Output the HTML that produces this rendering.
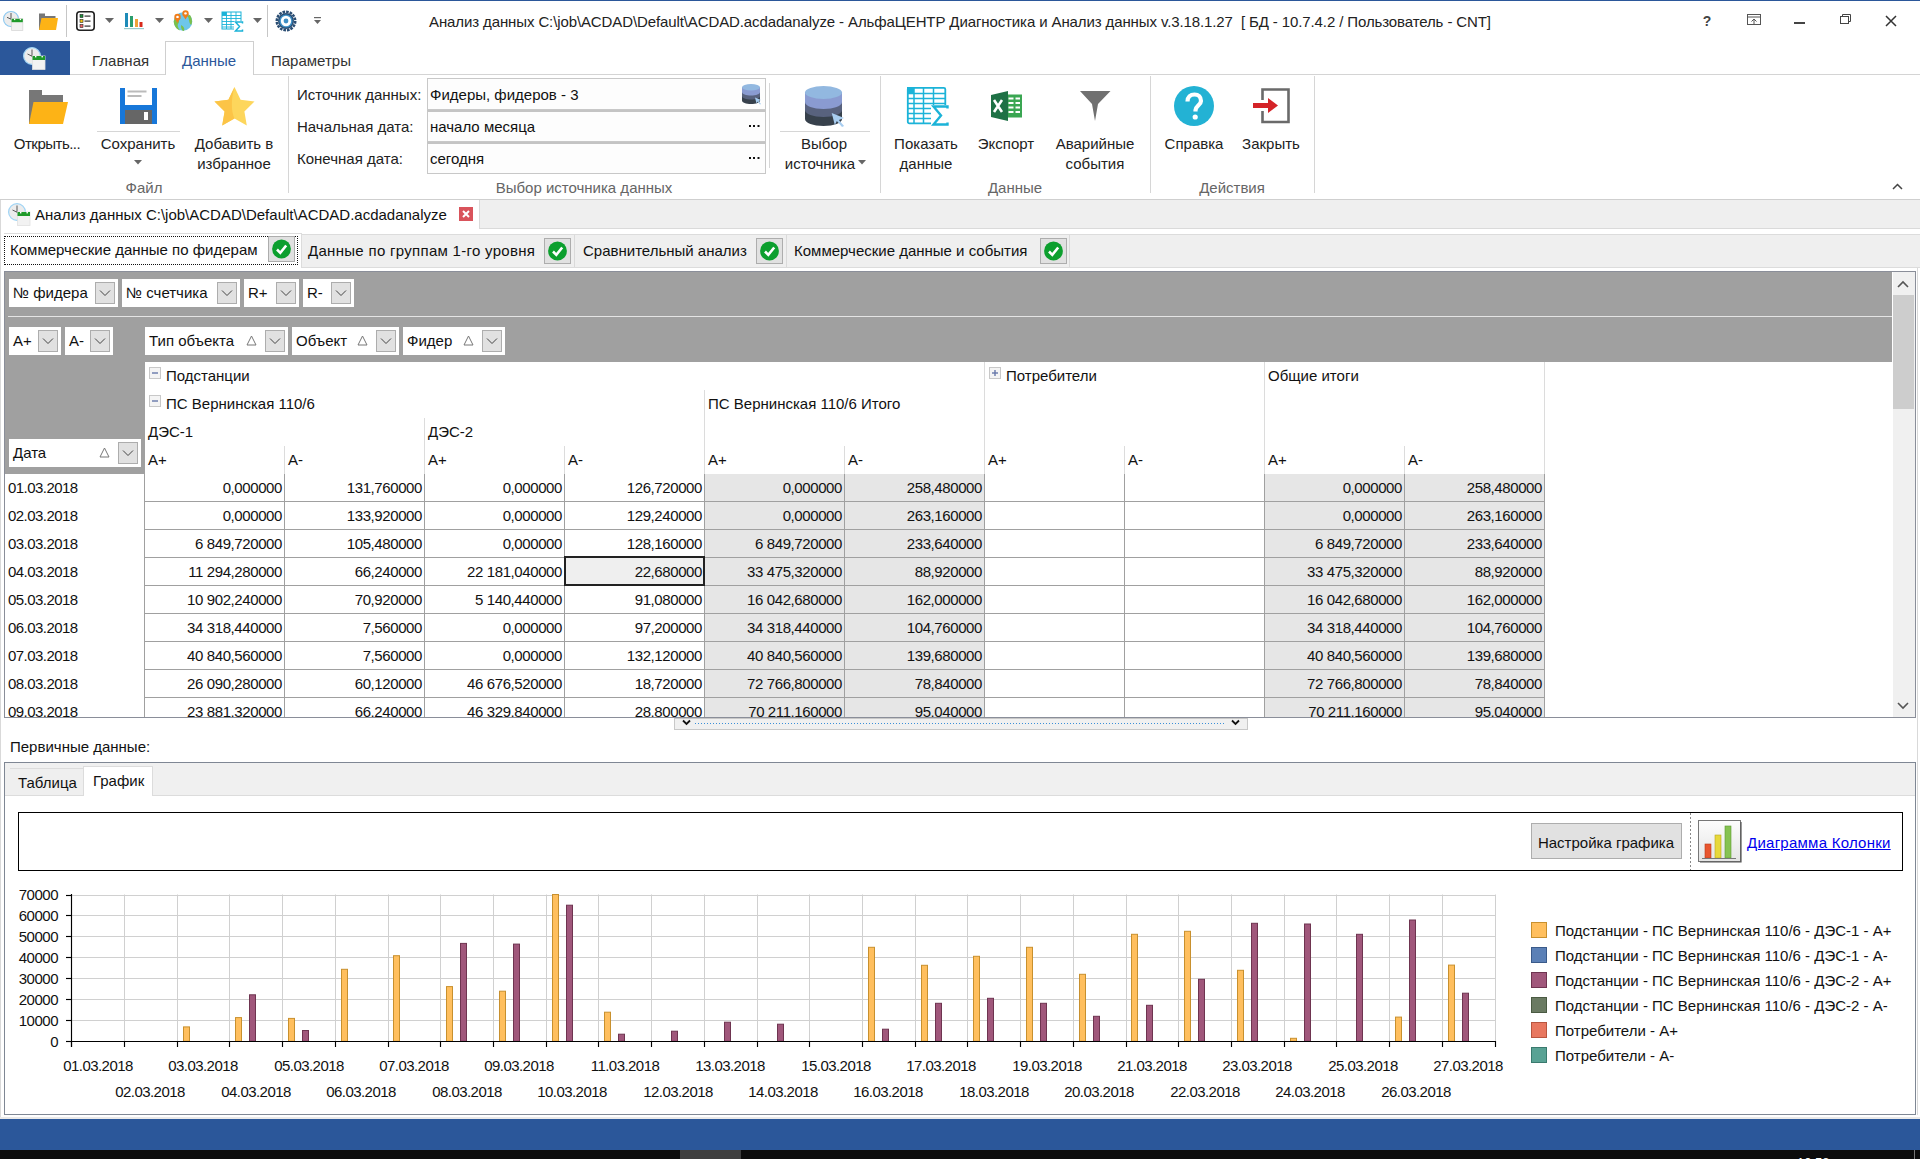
<!DOCTYPE html>
<html lang="ru"><head><meta charset="utf-8"><title>Анализ данных - АльфаЦЕНТР</title>
<style>
html,body{margin:0;padding:0;}
body{width:1920px;height:1159px;position:relative;overflow:hidden;background:#fff;font-family:"Liberation Sans",sans-serif;}
.t{position:absolute;white-space:pre;line-height:17px;font-family:"Liberation Sans",sans-serif;}
.r{position:absolute;}
.s{position:absolute;overflow:visible;}
</style></head><body>

<div class="r" style="left:0px;top:0px;width:1920px;height:1px;background:#2b579a;"></div>
<svg class="s" style="left:3px;top:11px;" width="22" height="21" viewBox="0 0 22 21"><circle cx="8" cy="8" r="7.5" fill="#ececec" stroke="#8cc8f0" stroke-width="1.1"/><path d="M8 2V8.2L4 6.3" stroke="#333" stroke-width="0.8" fill="none"/><rect x="8.6" y="7.8" width="11.2" height="11.6" fill="#f2f2f2" stroke="#d8d8d8" stroke-width="0.8"/><rect x="8.6" y="7.8" width="11.2" height="3.4" fill="#1f9a2a"/><rect x="11" y="7.8" width="1.3" height="1.3" fill="#fff"/><rect x="16.8" y="7.8" width="1.3" height="1.3" fill="#fff"/></svg>
<svg class="s" style="left:39px;top:13px;" width="20" height="17" viewBox="0 0 20 17"><path d="M0 0.5H6V3H16.5V17H0Z" fill="#777"/><path d="M2.5 5H19L17 17H0Z" fill="#fdb316"/></svg>
<div class="r" style="left:66px;top:5px;width:1px;height:32px;background:#c6c6c6;"></div>
<svg class="s" style="left:76px;top:11px;" width="19" height="20" viewBox="0 0 19 20"><rect x="0.8" y="0.8" width="17.4" height="18.4" rx="3" fill="#fff" stroke="#222" stroke-width="1.6"/><rect x="4" y="3.5" width="3" height="3" fill="#1b8f3a" stroke="#222" stroke-width=".6"/><rect x="8.5" y="4.5" width="6" height="1.2" fill="#333"/><rect x="4" y="8.5" width="3" height="3" fill="#f3c413" stroke="#222" stroke-width=".6"/><rect x="8.5" y="9.5" width="6" height="1.2" fill="#333"/><rect x="4" y="13.5" width="3" height="3" fill="#e66" stroke="#222" stroke-width=".6"/><rect x="8.5" y="14.5" width="6" height="1.2" fill="#333"/></svg>
<svg class="s" style="left:105px;top:18px;" width="9" height="5" viewBox="0 0 9 5"><path d="M0 0H9L4.5 5Z" fill="#666"/></svg>
<svg class="s" style="left:124px;top:13px;" width="21" height="17" viewBox="0 0 21 17"><rect x="1" y="0" width="3" height="14" fill="#1e8bb8"/><rect x="6" y="3" width="3" height="11" fill="#2a9d6c"/><rect x="11" y="6" width="3" height="8" fill="#f0a23a"/><rect x="15.5" y="9" width="3" height="5" fill="#d82a1c"/><rect x="0" y="15" width="20" height="1.2" fill="#9cc"/></svg>
<svg class="s" style="left:155px;top:18px;" width="9" height="5" viewBox="0 0 9 5"><path d="M0 0H9L4.5 5Z" fill="#666"/></svg>
<svg class="s" style="left:173px;top:10px;" width="20" height="22" viewBox="0 0 20 22"><circle cx="10" cy="11.5" r="9.3" fill="#6ec6ea"/><path d="M3 6C6 8 7 12 5 14C4 16 6 19 7 20.5C3 19 0.7 15 0.8 11Z" fill="#7cc04b"/><path d="M14 6C17 8 15 12 18 15C19.5 13 19.5 9 17 5Z" fill="#7cc04b"/><path d="M8 15C10 16 12 18 11 21C9 21 8 19 8 15Z" fill="#7cc04b"/><circle cx="4.5" cy="7" r="3.2" fill="#f07d1a"/><circle cx="4.5" cy="7" r="1.3" fill="#fff"/><path d="M1.6 8.3L4.5 13L7.4 8.3Z" fill="#f07d1a"/><circle cx="12.5" cy="3.5" r="3.2" fill="#f07d1a"/><circle cx="12.5" cy="3.5" r="1.3" fill="#fff"/><path d="M9.6 4.8L12.5 9.5L15.4 4.8Z" fill="#f07d1a"/></svg>
<svg class="s" style="left:204px;top:18px;" width="9" height="5" viewBox="0 0 9 5"><path d="M0 0H9L4.5 5Z" fill="#666"/></svg>
<svg class="s" style="left:221px;top:11px;" width="23" height="21" viewBox="0 0 23 21"><rect x="1" y="1" width="19" height="17" fill="#fff" stroke="#1bb3d8" stroke-width="1"/><path d="M1 4.5H20M1 7.5H20M1 10.5H15M1 13.5H14M1 16H14M5.5 1V18M10 1V18M15 1V11" stroke="#1bb3d8" stroke-width="0.9"/><rect x="1" y="1" width="4.5" height="3.5" fill="#1bb3d8"/><path d="M13 10H23V21H13Z" fill="#fff"/><path d="M21.5 12.5V11H14.5L18.5 15.5L14.5 20H21.5V18.5" fill="none" stroke="#1bb3d8" stroke-width="1.5"/></svg>
<svg class="s" style="left:253px;top:18px;" width="9" height="5" viewBox="0 0 9 5"><path d="M0 0H9L4.5 5Z" fill="#666"/></svg>
<div class="r" style="left:267px;top:5px;width:1px;height:32px;background:#c6c6c6;"></div>
<svg class="s" style="left:275px;top:10px;" width="22" height="22" viewBox="0 0 22 22"><circle cx="11" cy="11" r="9.2" fill="none" stroke="#2a4d73" stroke-width="2.6" stroke-dasharray="2.6 1.0"/><circle cx="11" cy="11" r="8" fill="#2a4d73"/><circle cx="11" cy="11" r="6.6" fill="#3d8fc6"/><circle cx="11" cy="11" r="5.2" fill="#fff"/><circle cx="11" cy="11" r="2.4" fill="#3d8fc6"/></svg>
<svg class="s" style="left:314px;top:17px;" width="7" height="8" viewBox="0 0 7 8"><rect x="0" y="0" width="7" height="1.2" fill="#666"/><path d="M0 3H7L3.5 7Z" fill="#666"/></svg>
<div class="t " style="left:429px;top:13px;font-size:15px;color:#222;letter-spacing:-0.11px;">Анализ данных C:\job\ACDAD\Default\ACDAD.acdadanalyze - АльфаЦЕНТР Диагностика и Анализ данных v.3.18.1.27  [ БД - 10.7.4.2 / Пользователь - CNT]</div>
<div class="t " style="left:1207px;width:1000px;text-align:center;top:13px;font-size:14px;color:#444;font-weight:bold;">?</div>
<svg class="s" style="left:1747px;top:14px;" width="14" height="11" viewBox="0 0 14 11"><rect x="0.5" y="0.5" width="13" height="10" fill="none" stroke="#555"/><path d="M1 3H13" stroke="#555"/><path d="M7 10V5M4.5 7.5L7 5L9.5 7.5" stroke="#555" fill="none"/></svg>
<div class="r" style="left:1794px;top:22px;width:11px;height:1.5px;background:#444;"></div>
<svg class="s" style="left:1840px;top:14px;" width="11" height="10" viewBox="0 0 11 10"><rect x="0.5" y="2.5" width="8" height="7" fill="none" stroke="#444"/><path d="M2.5 2.5V0.5H10.5V7.5H8.5" fill="none" stroke="#444"/></svg>
<svg class="s" style="left:1885px;top:15px;" width="12" height="12" viewBox="0 0 12 12"><path d="M1 1L11 11M11 1L1 11" stroke="#333" stroke-width="1.5"/></svg>
<div class="r" style="left:0px;top:41px;width:70px;height:34px;background:#2b579a;"></div>
<svg class="s" style="left:23px;top:47px;" width="24" height="24" viewBox="0 0 24 24"><circle cx="9" cy="9" r="8.4" fill="#ececec" stroke="#9fd4f5" stroke-width="1.2"/><path d="M9 2.5V9.2L4.5 7" stroke="#333" stroke-width="0.8" fill="none"/><rect x="9.5" y="9" width="12.5" height="13.5" fill="#f2f2f2" stroke="#e0e0e0" stroke-width="0.8"/><rect x="9.5" y="9" width="12.5" height="4" fill="#1f9a2a"/><rect x="12" y="9" width="1.4" height="1.4" fill="#fff"/><rect x="18.5" y="9" width="1.4" height="1.4" fill="#fff"/></svg>
<div class="r" style="left:70px;top:74px;width:96px;height:1px;background:#d4d4d4;"></div>
<div class="r" style="left:253px;top:74px;width:1667px;height:1px;background:#d4d4d4;"></div>
<div class="r" style="left:165px;top:41px;width:89px;height:34px;border:1px solid #cfcfcf;box-sizing:border-box;border-bottom:none;background:#fff;"></div>
<div class="t " style="left:92px;top:52px;font-size:15px;color:#333;">Главная</div>
<div class="t " style="left:182px;top:52px;font-size:15px;color:#2b579a;">Данные</div>
<div class="t " style="left:271px;top:52px;font-size:15px;color:#333;">Параметры</div>
<svg class="s" style="left:29px;top:90px;" width="39" height="34" viewBox="0 0 39 34"><path d="M0 0H13V5H34V34H0Z" fill="#777"/><path d="M4.5 12H39L34 34H0Z" fill="#fdb316"/></svg>
<div class="t " style="left:-453px;width:1000px;text-align:center;top:135px;font-size:15px;color:#222;letter-spacing:-0.5px;">Открыть...</div>
<svg class="s" style="left:120px;top:88px;" width="37" height="36" viewBox="0 0 37 36"><rect x="0" y="0" width="37" height="36" fill="#1777d9"/><rect x="5" y="0" width="27" height="17" fill="#fff"/><rect x="7.5" y="2.5" width="19" height="2" fill="#bbb"/><rect x="7.5" y="7" width="14" height="2" fill="#bbb"/><rect x="5" y="22" width="27" height="14" fill="#666"/><rect x="24" y="24" width="4" height="8" fill="#fff"/></svg>
<div class="r" style="left:97px;top:131px;width:83px;height:1px;background:#d6d6d6;"></div>
<div class="t " style="left:-362px;width:1000px;text-align:center;top:135px;font-size:15px;color:#222;">Сохранить</div>
<svg class="s" style="left:134px;top:160px;" width="8" height="5" viewBox="0 0 8 5"><path d="M0 0H8L4 4.5Z" fill="#666"/></svg>
<svg class="s" style="left:214px;top:87px;" width="41" height="39" viewBox="0 0 41 39"><path d="M20.5 0L26.6 12.8L40.5 14.6L30.4 24.4L32.8 38.5L20.5 31.6L8.2 38.5L10.6 24.4L0.5 14.6L14.4 12.8Z" fill="#fdd65c"/><path d="M20.5 0L14.4 12.8L0.5 14.6L10.6 24.4L8.2 38.5L20.5 31.6C17 24 17 12 20.5 0Z" fill="#fcc447"/></svg>
<div class="t " style="left:-266px;width:1000px;text-align:center;top:135px;font-size:15px;color:#222;">Добавить в</div>
<div class="t " style="left:-266px;width:1000px;text-align:center;top:155px;font-size:15px;color:#222;">избранное</div>
<div class="t " style="left:-356px;width:1000px;text-align:center;top:179px;font-size:15px;color:#666;">Файл</div>
<div class="r" style="left:288px;top:76px;width:1px;height:117px;background:#d6d6d6;"></div>
<div class="t " style="left:297px;top:86px;font-size:15px;color:#222;">Источник данных:</div>
<div class="t " style="left:297px;top:118px;font-size:15px;color:#222;">Начальная дата:</div>
<div class="t " style="left:297px;top:150px;font-size:15px;color:#222;">Конечная дата:</div>
<div class="r" style="left:427px;top:78px;width:339px;height:32px;background:#fdfdfd;border:1px solid #c8c8c8;box-sizing:border-box;"></div>
<div class="r" style="left:427px;top:110px;width:339px;height:32px;background:#fdfdfd;border:1px solid #c8c8c8;box-sizing:border-box;border-top:2px solid #c4c4c4;"></div>
<div class="r" style="left:427px;top:142px;width:339px;height:32px;background:#fdfdfd;border:1px solid #c8c8c8;box-sizing:border-box;border-top:2px solid #c4c4c4;"></div>
<div class="t " style="left:430px;top:86px;font-size:15px;color:#111;">Фидеры, фидеров - 3</div>
<div class="t " style="left:430px;top:118px;font-size:15px;color:#111;">начало месяца</div>
<div class="t " style="left:430px;top:150px;font-size:15px;color:#111;">сегодня</div>
<svg class="s" style="left:742px;top:84px;" width="18" height="20" viewBox="0 0 18 20"><g transform="scale(0.5,0.5)"><path d="M0 6V33C0 37 8 40 18 40S36 37 36 33V6Z" fill="#37414c"/><path d="M0 6V24C0 28 8 31 18 31S36 28 36 24V6Z" fill="#58627e"/><path d="M0 6V16C0 20 8 23 18 23S36 20 36 16V6Z" fill="#8a9bd1"/><ellipse cx="18" cy="6.5" rx="18" ry="6.5" fill="#92b8e0"/><path d="M26 27L38 32L33 34L38 40L36 41L31 35L29 39Z" fill="#a8cdf0"/></g></svg>
<svg class="s" style="left:749px;top:125px;" width="12" height="3" viewBox="0 0 12 3"><rect x="0" y="0" width="2" height="2" fill="#111"/><rect x="4" y="0" width="2" height="2" fill="#111"/><rect x="8.5" y="0" width="2" height="2" fill="#111"/></svg>
<svg class="s" style="left:749px;top:157px;" width="12" height="3" viewBox="0 0 12 3"><rect x="0" y="0" width="2" height="2" fill="#111"/><rect x="4" y="0" width="2" height="2" fill="#111"/><rect x="8.5" y="0" width="2" height="2" fill="#111"/></svg>
<div class="r" style="left:769px;top:83px;width:1px;height:85px;background:#d6d6d6;"></div>
<svg class="s" style="left:805px;top:86px;" width="37" height="40" viewBox="0 0 37 40"><g transform="scale(1.0277777777777777,1.0)"><path d="M0 6V33C0 37 8 40 18 40S36 37 36 33V6Z" fill="#37414c"/><path d="M0 6V24C0 28 8 31 18 31S36 28 36 24V6Z" fill="#58627e"/><path d="M0 6V16C0 20 8 23 18 23S36 20 36 16V6Z" fill="#8a9bd1"/><ellipse cx="18" cy="6.5" rx="18" ry="6.5" fill="#92b8e0"/><path d="M26 27L38 32L33 34L38 40L36 41L31 35L29 39Z" fill="#a8cdf0"/></g></svg>
<div class="r" style="left:780px;top:131px;width:90px;height:1px;background:#d6d6d6;"></div>
<div class="t " style="left:324px;width:1000px;text-align:center;top:135px;font-size:15px;color:#222;">Выбор</div>
<div class="t " style="left:320px;width:1000px;text-align:center;top:155px;font-size:15px;color:#222;">источника</div>
<svg class="s" style="left:858px;top:160px;" width="8" height="5" viewBox="0 0 8 5"><path d="M0 0H8L4 4.5Z" fill="#666"/></svg>
<div class="t " style="left:84px;width:1000px;text-align:center;top:179px;font-size:15px;color:#666;">Выбор источника данных</div>
<div class="r" style="left:880px;top:76px;width:1px;height:117px;background:#d6d6d6;"></div>
<svg class="s" style="left:906px;top:86px;" width="43" height="41" viewBox="0 0 43 41"><rect x="1.8" y="1.8" width="37.5" height="35.5" rx="1.5" fill="#fff" stroke="#1bb3d8" stroke-width="1.8"/><path d="M1 7.5H39M1 12.5H39M1 17.5H39M1 22.5H30M1 27.5H28M1 32.5H28M8 1V38M17.5 1V38M27.5 1V26" stroke="#1bb3d8" stroke-width="1.5"/><rect x="1" y="1" width="7" height="6.5" fill="#1bb3d8"/><path d="M25 19H42V40H25Z" fill="#fff"/><path d="M41.5 22.5V20.5H27.5L35 29.5L27.5 38.5H41.5V36.5" fill="none" stroke="#1bb3d8" stroke-width="2.4"/></svg>
<div class="t " style="left:426px;width:1000px;text-align:center;top:135px;font-size:15px;color:#222;">Показать</div>
<div class="t " style="left:426px;width:1000px;text-align:center;top:155px;font-size:15px;color:#222;">данные</div>
<svg class="s" style="left:991px;top:91px;" width="32" height="30" viewBox="0 0 32 30"><rect x="14" y="3.5" width="17" height="23" fill="#3aa652"/><path d="M17.5 7.5H22.5M24.5 7.5H29M17.5 12H22.5M24.5 12H29M17.5 16.5H22.5M24.5 16.5H29M17.5 21H22.5M24.5 21H29" stroke="#fff" stroke-width="2.2"/><path d="M0 4L17 0V30L0 26Z" fill="#1e7145"/><path d="M3 9L11 21M11 9L3 21" stroke="#fff" stroke-width="2.6"/></svg>
<div class="t " style="left:506px;width:1000px;text-align:center;top:135px;font-size:15px;color:#222;">Экспорт</div>
<svg class="s" style="left:1080px;top:91px;" width="31" height="30" viewBox="0 0 31 30"><path d="M0 0H30.5L18 13L15 30L12 13Z" fill="#707070"/></svg>
<div class="t " style="left:595px;width:1000px;text-align:center;top:135px;font-size:15px;color:#222;">Аварийные</div>
<div class="t " style="left:595px;width:1000px;text-align:center;top:155px;font-size:15px;color:#222;">события</div>
<div class="t " style="left:515px;width:1000px;text-align:center;top:179px;font-size:15px;color:#666;">Данные</div>
<div class="r" style="left:1150px;top:76px;width:1px;height:117px;background:#d6d6d6;"></div>
<svg class="s" style="left:1174px;top:86px;" width="40" height="40" viewBox="0 0 40 40"><circle cx="20" cy="20" r="20" fill="#23b2d4"/><path d="M13.5 15.5C13.5 11 16.5 8.5 20.5 8.5S27 11 27 15C27 19 21.5 20 21.5 24V25.5" fill="none" stroke="#fff" stroke-width="4.2"/><circle cx="21.2" cy="31" r="2.6" fill="#fff"/></svg>
<div class="t " style="left:694px;width:1000px;text-align:center;top:135px;font-size:15px;color:#222;">Справка</div>
<svg class="s" style="left:1253px;top:88px;" width="37" height="36" viewBox="0 0 37 36"><path d="M9.5 12V1.5H35.5V34H9.5V23" fill="none" stroke="#6a6a6a" stroke-width="2.6"/><path d="M0 15H15V10L25 17.5L15 25V20H0Z" fill="#d42328"/></svg>
<div class="t " style="left:771px;width:1000px;text-align:center;top:135px;font-size:15px;color:#222;">Закрыть</div>
<div class="t " style="left:732px;width:1000px;text-align:center;top:179px;font-size:15px;color:#666;">Действия</div>
<div class="r" style="left:1314px;top:76px;width:1px;height:117px;background:#d6d6d6;"></div>
<svg class="s" style="left:1892px;top:183px;" width="11" height="7" viewBox="0 0 11 7"><path d="M1 6L5.5 1.5L10 6" fill="none" stroke="#444" stroke-width="1.5"/></svg>
<div class="r" style="left:0px;top:199px;width:1920px;height:1px;background:#cfcfcf;"></div>
<div class="r" style="left:0px;top:200px;width:1px;height:919px;background:#d9d9d9;"></div>
<div class="r" style="left:1917px;top:268px;width:1px;height:851px;background:#d9d9d9;"></div>
<div class="r" style="left:479px;top:200px;width:1441px;height:29px;background:#efefef;"></div>
<div class="r" style="left:479px;top:200px;width:1px;height:29px;background:#dadada;"></div>
<div class="r" style="left:479px;top:228px;width:1441px;height:1px;background:#dadada;"></div>
<svg class="s" style="left:8px;top:203px;" width="24" height="24" viewBox="0 0 24 24"><circle cx="9" cy="9" r="8.4" fill="#ececec" stroke="#9fd4f5" stroke-width="1.2"/><path d="M9 2.5V9.2L4.5 7" stroke="#333" stroke-width="0.8" fill="none"/><rect x="9.5" y="9" width="12.5" height="13.5" fill="#f2f2f2" stroke="#e0e0e0" stroke-width="0.8"/><rect x="9.5" y="9" width="12.5" height="4" fill="#1f9a2a"/><rect x="12" y="9" width="1.4" height="1.4" fill="#fff"/><rect x="18.5" y="9" width="1.4" height="1.4" fill="#fff"/></svg>
<div class="t " style="left:35px;top:206px;font-size:15px;color:#111;">Анализ данных C:\job\ACDAD\Default\ACDAD.acdadanalyze</div>
<svg class="s" style="left:459px;top:207px;" width="14" height="14" viewBox="0 0 14 14"><rect width="14" height="14" fill="#d9535b"/><path d="M4 4L10 10M10 4L4 10" stroke="#fff" stroke-width="2"/></svg>
<div class="r" style="left:301px;top:234px;width:1619px;height:1px;background:#dcdcdc;"></div>
<div class="r" style="left:301px;top:235px;width:1619px;height:32px;background:#efefef;"></div>
<div class="r" style="left:301px;top:267px;width:1619px;height:1px;background:#dcdcdc;"></div>
<div class="r" style="left:4px;top:233px;width:298px;height:38px;background:#fff;"></div>
<div class="r" style="left:4px;top:233px;width:298px;height:1px;background:#dcdcdc;"></div>
<div class="r" style="left:301px;top:233px;width:1px;height:35px;background:#dcdcdc;"></div>
<div class="r" style="left:4px;top:236px;width:294px;height:29px;border:1px dotted #111;box-sizing:border-box;"></div>
<div class="t " style="left:10px;top:241px;font-size:15px;color:#111;">Коммерческие данные по фидерам</div>
<svg class="s" style="left:268px;top:236px;" width="28" height="27" viewBox="0 0 28 27"><rect x="0.5" y="0.5" width="26" height="25" fill="#e1e1e1" stroke="#adadad"/><circle cx="13.5" cy="13" r="9.4" fill="#0c9f2e"/><path d="M9 13.5L12.3 16.8L18.2 9.5" fill="none" stroke="#fff" stroke-width="2.6"/></svg>
<div class="t " style="left:308px;top:242px;font-size:15px;color:#111;letter-spacing:0.3px;">Данные по группам 1-го уровня</div>
<svg class="s" style="left:544px;top:238px;" width="28" height="27" viewBox="0 0 28 27"><rect x="0.5" y="0.5" width="26" height="25" fill="#e1e1e1" stroke="#adadad"/><circle cx="13.5" cy="13" r="9.4" fill="#0c9f2e"/><path d="M9 13.5L12.3 16.8L18.2 9.5" fill="none" stroke="#fff" stroke-width="2.6"/></svg>
<div class="r" style="left:574px;top:235px;width:1px;height:32px;background:#dadada;"></div>
<div class="t " style="left:583px;top:242px;font-size:15px;color:#111;">Сравнительный анализ</div>
<svg class="s" style="left:756px;top:238px;" width="28" height="27" viewBox="0 0 28 27"><rect x="0.5" y="0.5" width="26" height="25" fill="#e1e1e1" stroke="#adadad"/><circle cx="13.5" cy="13" r="9.4" fill="#0c9f2e"/><path d="M9 13.5L12.3 16.8L18.2 9.5" fill="none" stroke="#fff" stroke-width="2.6"/></svg>
<div class="r" style="left:786px;top:235px;width:1px;height:32px;background:#dadada;"></div>
<div class="t " style="left:794px;top:242px;font-size:15px;color:#111;">Коммерческие данные и события</div>
<svg class="s" style="left:1040px;top:238px;" width="28" height="27" viewBox="0 0 28 27"><rect x="0.5" y="0.5" width="26" height="25" fill="#e1e1e1" stroke="#adadad"/><circle cx="13.5" cy="13" r="9.4" fill="#0c9f2e"/><path d="M9 13.5L12.3 16.8L18.2 9.5" fill="none" stroke="#fff" stroke-width="2.6"/></svg>
<div class="r" style="left:1069px;top:235px;width:1px;height:32px;background:#dadada;"></div>
<div class="r" style="left:4px;top:271px;width:1912px;height:447px;background:#fff;"></div>
<div class="r" style="left:4px;top:271px;width:1912px;height:1px;background:#8a8e99;"></div>
<div class="r" style="left:4px;top:271px;width:1px;height:447px;background:#8a8e99;"></div>
<div class="r" style="left:1915px;top:271px;width:1px;height:447px;background:#8a8e99;"></div>
<div class="r" style="left:4px;top:717px;width:1912px;height:1px;background:#8a8e99;"></div>
<div class="r" style="left:5px;top:272px;width:1887px;height:90px;background:#a0a0a0;"></div>
<div class="r" style="left:5px;top:362px;width:140px;height:112px;background:#a0a0a0;"></div>
<div class="r" style="left:8px;top:316px;width:1884px;height:1px;background:#e4e4e4;"></div>
<div class="r" style="left:9px;top:279px;width:109px;height:28px;background:#fff;"></div>
<div class="t " style="left:13px;top:284px;font-size:15px;color:#111;">№ фидера</div>
<svg class="s" style="left:95px;top:282px;" width="20" height="22" viewBox="0 0 20 22"><rect x="0.5" y="0.5" width="19" height="21" fill="#e1e1e1" stroke="#adadad"/><path d="M5.0 8.5L10.0 13.5L15.0 8.5" fill="none" stroke="#444" stroke-width="1"/></svg>
<div class="r" style="left:122px;top:279px;width:118px;height:28px;background:#fff;"></div>
<div class="t " style="left:126px;top:284px;font-size:15px;color:#111;">№ счетчика</div>
<svg class="s" style="left:217px;top:282px;" width="20" height="22" viewBox="0 0 20 22"><rect x="0.5" y="0.5" width="19" height="21" fill="#e1e1e1" stroke="#adadad"/><path d="M5.0 8.5L10.0 13.5L15.0 8.5" fill="none" stroke="#444" stroke-width="1"/></svg>
<div class="r" style="left:244px;top:279px;width:55px;height:28px;background:#fff;"></div>
<div class="t " style="left:248px;top:284px;font-size:15px;color:#111;">R+</div>
<svg class="s" style="left:276px;top:282px;" width="20" height="22" viewBox="0 0 20 22"><rect x="0.5" y="0.5" width="19" height="21" fill="#e1e1e1" stroke="#adadad"/><path d="M5.0 8.5L10.0 13.5L15.0 8.5" fill="none" stroke="#444" stroke-width="1"/></svg>
<div class="r" style="left:303px;top:279px;width:51px;height:28px;background:#fff;"></div>
<div class="t " style="left:307px;top:284px;font-size:15px;color:#111;">R-</div>
<svg class="s" style="left:331px;top:282px;" width="20" height="22" viewBox="0 0 20 22"><rect x="0.5" y="0.5" width="19" height="21" fill="#e1e1e1" stroke="#adadad"/><path d="M5.0 8.5L10.0 13.5L15.0 8.5" fill="none" stroke="#444" stroke-width="1"/></svg>
<div class="r" style="left:9px;top:327px;width:52px;height:28px;background:#fff;"></div>
<div class="t " style="left:13px;top:332px;font-size:15px;color:#111;">A+</div>
<svg class="s" style="left:38px;top:330px;" width="20" height="22" viewBox="0 0 20 22"><rect x="0.5" y="0.5" width="19" height="21" fill="#e1e1e1" stroke="#adadad"/><path d="M5.0 8.5L10.0 13.5L15.0 8.5" fill="none" stroke="#444" stroke-width="1"/></svg>
<div class="r" style="left:65px;top:327px;width:48px;height:28px;background:#fff;"></div>
<div class="t " style="left:69px;top:332px;font-size:15px;color:#111;">A-</div>
<svg class="s" style="left:90px;top:330px;" width="20" height="22" viewBox="0 0 20 22"><rect x="0.5" y="0.5" width="19" height="21" fill="#e1e1e1" stroke="#adadad"/><path d="M5.0 8.5L10.0 13.5L15.0 8.5" fill="none" stroke="#444" stroke-width="1"/></svg>
<div class="r" style="left:145px;top:327px;width:143px;height:28px;background:#fff;"></div>
<div class="t " style="left:149px;top:332px;font-size:15px;color:#111;">Тип объекта</div>
<svg class="s" style="left:246px;top:335px;" width="11" height="11" viewBox="0 0 11 11"><path d="M5.5 1L10 10H1Z" fill="none" stroke="#777" stroke-width="1"/></svg>
<svg class="s" style="left:265px;top:330px;" width="20" height="22" viewBox="0 0 20 22"><rect x="0.5" y="0.5" width="19" height="21" fill="#e1e1e1" stroke="#adadad"/><path d="M5.0 8.5L10.0 13.5L15.0 8.5" fill="none" stroke="#444" stroke-width="1"/></svg>
<div class="r" style="left:292px;top:327px;width:107px;height:28px;background:#fff;"></div>
<div class="t " style="left:296px;top:332px;font-size:15px;color:#111;">Объект</div>
<svg class="s" style="left:357px;top:335px;" width="11" height="11" viewBox="0 0 11 11"><path d="M5.5 1L10 10H1Z" fill="none" stroke="#777" stroke-width="1"/></svg>
<svg class="s" style="left:376px;top:330px;" width="20" height="22" viewBox="0 0 20 22"><rect x="0.5" y="0.5" width="19" height="21" fill="#e1e1e1" stroke="#adadad"/><path d="M5.0 8.5L10.0 13.5L15.0 8.5" fill="none" stroke="#444" stroke-width="1"/></svg>
<div class="r" style="left:403px;top:327px;width:102px;height:28px;background:#fff;"></div>
<div class="t " style="left:407px;top:332px;font-size:15px;color:#111;">Фидер</div>
<svg class="s" style="left:463px;top:335px;" width="11" height="11" viewBox="0 0 11 11"><path d="M5.5 1L10 10H1Z" fill="none" stroke="#777" stroke-width="1"/></svg>
<svg class="s" style="left:482px;top:330px;" width="20" height="22" viewBox="0 0 20 22"><rect x="0.5" y="0.5" width="19" height="21" fill="#e1e1e1" stroke="#adadad"/><path d="M5.0 8.5L10.0 13.5L15.0 8.5" fill="none" stroke="#444" stroke-width="1"/></svg>
<div class="r" style="left:9px;top:439px;width:132px;height:28px;background:#fff;"></div>
<div class="t " style="left:13px;top:444px;font-size:15px;color:#111;">Дата</div>
<svg class="s" style="left:99px;top:447px;" width="11" height="11" viewBox="0 0 11 11"><path d="M5.5 1L10 10H1Z" fill="none" stroke="#777" stroke-width="1"/></svg>
<svg class="s" style="left:118px;top:442px;" width="20" height="22" viewBox="0 0 20 22"><rect x="0.5" y="0.5" width="19" height="21" fill="#e1e1e1" stroke="#adadad"/><path d="M5.0 8.5L10.0 13.5L15.0 8.5" fill="none" stroke="#444" stroke-width="1"/></svg>
<svg class="s" style="left:149px;top:367px;" width="12" height="12" viewBox="0 0 12 12"><rect x="0.5" y="0.5" width="11" height="11" fill="#f4f4f4" stroke="#c8c8c8"/><path d="M3 6H9" stroke="#6677aa" stroke-width="1.4"/></svg>
<div class="t " style="left:166px;top:367px;font-size:15px;color:#111;">Подстанции</div>
<svg class="s" style="left:149px;top:395px;" width="12" height="12" viewBox="0 0 12 12"><rect x="0.5" y="0.5" width="11" height="11" fill="#f4f4f4" stroke="#c8c8c8"/><path d="M3 6H9" stroke="#6677aa" stroke-width="1.4"/></svg>
<div class="t " style="left:166px;top:395px;font-size:15px;color:#111;">ПС Вернинская 110/6</div>
<div class="t " style="left:708px;top:395px;font-size:15px;color:#111;">ПС Вернинская 110/6 Итого</div>
<svg class="s" style="left:989px;top:367px;" width="12" height="12" viewBox="0 0 12 12"><rect x="0.5" y="0.5" width="11" height="11" fill="#f4f4f4" stroke="#c8c8c8"/><path d="M3 6H9" stroke="#6677aa" stroke-width="1.4"/><path d="M6 3V9" stroke="#6677aa" stroke-width="1.4"/></svg>
<div class="t " style="left:1006px;top:367px;font-size:15px;color:#111;">Потребители</div>
<div class="t " style="left:1268px;top:367px;font-size:15px;color:#111;">Общие итоги</div>
<div class="t " style="left:148px;top:423px;font-size:15px;color:#111;">ДЭС-1</div>
<div class="t " style="left:428px;top:423px;font-size:15px;color:#111;">ДЭС-2</div>
<div class="t " style="left:148px;top:451px;font-size:15px;color:#111;">A+</div>
<div class="t " style="left:288px;top:451px;font-size:15px;color:#111;">A-</div>
<div class="t " style="left:428px;top:451px;font-size:15px;color:#111;">A+</div>
<div class="t " style="left:568px;top:451px;font-size:15px;color:#111;">A-</div>
<div class="t " style="left:708px;top:451px;font-size:15px;color:#111;">A+</div>
<div class="t " style="left:848px;top:451px;font-size:15px;color:#111;">A-</div>
<div class="t " style="left:988px;top:451px;font-size:15px;color:#111;">A+</div>
<div class="t " style="left:1128px;top:451px;font-size:15px;color:#111;">A-</div>
<div class="t " style="left:1268px;top:451px;font-size:15px;color:#111;">A+</div>
<div class="t " style="left:1408px;top:451px;font-size:15px;color:#111;">A-</div>
<div class="r" style="left:424px;top:418px;width:1px;height:56px;background:#dcdcdc;"></div>
<div class="r" style="left:284px;top:446px;width:1px;height:28px;background:#dcdcdc;"></div>
<div class="r" style="left:564px;top:446px;width:1px;height:28px;background:#dcdcdc;"></div>
<div class="r" style="left:844px;top:446px;width:1px;height:28px;background:#dcdcdc;"></div>
<div class="r" style="left:1124px;top:446px;width:1px;height:28px;background:#dcdcdc;"></div>
<div class="r" style="left:1404px;top:446px;width:1px;height:28px;background:#dcdcdc;"></div>
<div class="r" style="left:704px;top:390px;width:1px;height:84px;background:#dcdcdc;"></div>
<div class="r" style="left:984px;top:362px;width:1px;height:112px;background:#dcdcdc;"></div>
<div class="r" style="left:1264px;top:362px;width:1px;height:112px;background:#dcdcdc;"></div>
<div class="r" style="left:1544px;top:362px;width:1px;height:112px;background:#dcdcdc;"></div>
<div class="r" style="left:705px;top:474px;width:279px;height:243px;background:#e6e6e6;"></div>
<div class="r" style="left:1265px;top:474px;width:279px;height:243px;background:#e6e6e6;"></div>
<div class="r" style="left:565px;top:557px;width:139px;height:28px;background:#efefef;"></div>
<div class="r" style="left:145px;top:501px;width:1399px;height:1px;background:#a0a0a0;"></div>
<div class="r" style="left:145px;top:529px;width:1399px;height:1px;background:#a0a0a0;"></div>
<div class="r" style="left:145px;top:557px;width:1399px;height:1px;background:#a0a0a0;"></div>
<div class="r" style="left:145px;top:585px;width:1399px;height:1px;background:#a0a0a0;"></div>
<div class="r" style="left:145px;top:613px;width:1399px;height:1px;background:#a0a0a0;"></div>
<div class="r" style="left:145px;top:641px;width:1399px;height:1px;background:#a0a0a0;"></div>
<div class="r" style="left:145px;top:669px;width:1399px;height:1px;background:#a0a0a0;"></div>
<div class="r" style="left:145px;top:697px;width:1399px;height:1px;background:#a0a0a0;"></div>
<div class="r" style="left:144px;top:474px;width:1px;height:243px;background:#a0a0a0;"></div>
<div class="r" style="left:284px;top:474px;width:1px;height:243px;background:#a0a0a0;"></div>
<div class="r" style="left:424px;top:474px;width:1px;height:243px;background:#a0a0a0;"></div>
<div class="r" style="left:564px;top:474px;width:1px;height:243px;background:#a0a0a0;"></div>
<div class="r" style="left:704px;top:474px;width:1px;height:243px;background:#a0a0a0;"></div>
<div class="r" style="left:844px;top:474px;width:1px;height:243px;background:#a0a0a0;"></div>
<div class="r" style="left:984px;top:474px;width:1px;height:243px;background:#a0a0a0;"></div>
<div class="r" style="left:1124px;top:474px;width:1px;height:243px;background:#a0a0a0;"></div>
<div class="r" style="left:1264px;top:474px;width:1px;height:243px;background:#a0a0a0;"></div>
<div class="r" style="left:1404px;top:474px;width:1px;height:243px;background:#a0a0a0;"></div>
<div class="r" style="left:1544px;top:474px;width:1px;height:243px;background:#a0a0a0;"></div>
<svg class="s" style="left:564px;top:556px;" width="141" height="30" viewBox="0 0 141 30"><rect x="1" y="1" width="139" height="28" fill="none" stroke="#222" stroke-width="2"/></svg>
<div class="r" style="left:5px;top:474px;width:1887px;height:243px;overflow:hidden">
<div class="t" style="left:3px;top:5px;font-size:15px;color:#111;letter-spacing:-0.55px">01.03.2018</div>
<div class="t" style="left:-23px;width:300px;text-align:right;top:5px;font-size:15px;color:#111;letter-spacing:-0.4px">0,000000</div>
<div class="t" style="left:117px;width:300px;text-align:right;top:5px;font-size:15px;color:#111;letter-spacing:-0.4px">131,760000</div>
<div class="t" style="left:257px;width:300px;text-align:right;top:5px;font-size:15px;color:#111;letter-spacing:-0.4px">0,000000</div>
<div class="t" style="left:397px;width:300px;text-align:right;top:5px;font-size:15px;color:#111;letter-spacing:-0.4px">126,720000</div>
<div class="t" style="left:537px;width:300px;text-align:right;top:5px;font-size:15px;color:#111;letter-spacing:-0.4px">0,000000</div>
<div class="t" style="left:677px;width:300px;text-align:right;top:5px;font-size:15px;color:#111;letter-spacing:-0.4px">258,480000</div>
<div class="t" style="left:1097px;width:300px;text-align:right;top:5px;font-size:15px;color:#111;letter-spacing:-0.4px">0,000000</div>
<div class="t" style="left:1237px;width:300px;text-align:right;top:5px;font-size:15px;color:#111;letter-spacing:-0.4px">258,480000</div>
<div class="t" style="left:3px;top:33px;font-size:15px;color:#111;letter-spacing:-0.55px">02.03.2018</div>
<div class="t" style="left:-23px;width:300px;text-align:right;top:33px;font-size:15px;color:#111;letter-spacing:-0.4px">0,000000</div>
<div class="t" style="left:117px;width:300px;text-align:right;top:33px;font-size:15px;color:#111;letter-spacing:-0.4px">133,920000</div>
<div class="t" style="left:257px;width:300px;text-align:right;top:33px;font-size:15px;color:#111;letter-spacing:-0.4px">0,000000</div>
<div class="t" style="left:397px;width:300px;text-align:right;top:33px;font-size:15px;color:#111;letter-spacing:-0.4px">129,240000</div>
<div class="t" style="left:537px;width:300px;text-align:right;top:33px;font-size:15px;color:#111;letter-spacing:-0.4px">0,000000</div>
<div class="t" style="left:677px;width:300px;text-align:right;top:33px;font-size:15px;color:#111;letter-spacing:-0.4px">263,160000</div>
<div class="t" style="left:1097px;width:300px;text-align:right;top:33px;font-size:15px;color:#111;letter-spacing:-0.4px">0,000000</div>
<div class="t" style="left:1237px;width:300px;text-align:right;top:33px;font-size:15px;color:#111;letter-spacing:-0.4px">263,160000</div>
<div class="t" style="left:3px;top:61px;font-size:15px;color:#111;letter-spacing:-0.55px">03.03.2018</div>
<div class="t" style="left:-23px;width:300px;text-align:right;top:61px;font-size:15px;color:#111;letter-spacing:-0.4px">6 849,720000</div>
<div class="t" style="left:117px;width:300px;text-align:right;top:61px;font-size:15px;color:#111;letter-spacing:-0.4px">105,480000</div>
<div class="t" style="left:257px;width:300px;text-align:right;top:61px;font-size:15px;color:#111;letter-spacing:-0.4px">0,000000</div>
<div class="t" style="left:397px;width:300px;text-align:right;top:61px;font-size:15px;color:#111;letter-spacing:-0.4px">128,160000</div>
<div class="t" style="left:537px;width:300px;text-align:right;top:61px;font-size:15px;color:#111;letter-spacing:-0.4px">6 849,720000</div>
<div class="t" style="left:677px;width:300px;text-align:right;top:61px;font-size:15px;color:#111;letter-spacing:-0.4px">233,640000</div>
<div class="t" style="left:1097px;width:300px;text-align:right;top:61px;font-size:15px;color:#111;letter-spacing:-0.4px">6 849,720000</div>
<div class="t" style="left:1237px;width:300px;text-align:right;top:61px;font-size:15px;color:#111;letter-spacing:-0.4px">233,640000</div>
<div class="t" style="left:3px;top:89px;font-size:15px;color:#111;letter-spacing:-0.55px">04.03.2018</div>
<div class="t" style="left:-23px;width:300px;text-align:right;top:89px;font-size:15px;color:#111;letter-spacing:-0.4px">11 294,280000</div>
<div class="t" style="left:117px;width:300px;text-align:right;top:89px;font-size:15px;color:#111;letter-spacing:-0.4px">66,240000</div>
<div class="t" style="left:257px;width:300px;text-align:right;top:89px;font-size:15px;color:#111;letter-spacing:-0.4px">22 181,040000</div>
<div class="t" style="left:397px;width:300px;text-align:right;top:89px;font-size:15px;color:#111;letter-spacing:-0.4px">22,680000</div>
<div class="t" style="left:537px;width:300px;text-align:right;top:89px;font-size:15px;color:#111;letter-spacing:-0.4px">33 475,320000</div>
<div class="t" style="left:677px;width:300px;text-align:right;top:89px;font-size:15px;color:#111;letter-spacing:-0.4px">88,920000</div>
<div class="t" style="left:1097px;width:300px;text-align:right;top:89px;font-size:15px;color:#111;letter-spacing:-0.4px">33 475,320000</div>
<div class="t" style="left:1237px;width:300px;text-align:right;top:89px;font-size:15px;color:#111;letter-spacing:-0.4px">88,920000</div>
<div class="t" style="left:3px;top:117px;font-size:15px;color:#111;letter-spacing:-0.55px">05.03.2018</div>
<div class="t" style="left:-23px;width:300px;text-align:right;top:117px;font-size:15px;color:#111;letter-spacing:-0.4px">10 902,240000</div>
<div class="t" style="left:117px;width:300px;text-align:right;top:117px;font-size:15px;color:#111;letter-spacing:-0.4px">70,920000</div>
<div class="t" style="left:257px;width:300px;text-align:right;top:117px;font-size:15px;color:#111;letter-spacing:-0.4px">5 140,440000</div>
<div class="t" style="left:397px;width:300px;text-align:right;top:117px;font-size:15px;color:#111;letter-spacing:-0.4px">91,080000</div>
<div class="t" style="left:537px;width:300px;text-align:right;top:117px;font-size:15px;color:#111;letter-spacing:-0.4px">16 042,680000</div>
<div class="t" style="left:677px;width:300px;text-align:right;top:117px;font-size:15px;color:#111;letter-spacing:-0.4px">162,000000</div>
<div class="t" style="left:1097px;width:300px;text-align:right;top:117px;font-size:15px;color:#111;letter-spacing:-0.4px">16 042,680000</div>
<div class="t" style="left:1237px;width:300px;text-align:right;top:117px;font-size:15px;color:#111;letter-spacing:-0.4px">162,000000</div>
<div class="t" style="left:3px;top:145px;font-size:15px;color:#111;letter-spacing:-0.55px">06.03.2018</div>
<div class="t" style="left:-23px;width:300px;text-align:right;top:145px;font-size:15px;color:#111;letter-spacing:-0.4px">34 318,440000</div>
<div class="t" style="left:117px;width:300px;text-align:right;top:145px;font-size:15px;color:#111;letter-spacing:-0.4px">7,560000</div>
<div class="t" style="left:257px;width:300px;text-align:right;top:145px;font-size:15px;color:#111;letter-spacing:-0.4px">0,000000</div>
<div class="t" style="left:397px;width:300px;text-align:right;top:145px;font-size:15px;color:#111;letter-spacing:-0.4px">97,200000</div>
<div class="t" style="left:537px;width:300px;text-align:right;top:145px;font-size:15px;color:#111;letter-spacing:-0.4px">34 318,440000</div>
<div class="t" style="left:677px;width:300px;text-align:right;top:145px;font-size:15px;color:#111;letter-spacing:-0.4px">104,760000</div>
<div class="t" style="left:1097px;width:300px;text-align:right;top:145px;font-size:15px;color:#111;letter-spacing:-0.4px">34 318,440000</div>
<div class="t" style="left:1237px;width:300px;text-align:right;top:145px;font-size:15px;color:#111;letter-spacing:-0.4px">104,760000</div>
<div class="t" style="left:3px;top:173px;font-size:15px;color:#111;letter-spacing:-0.55px">07.03.2018</div>
<div class="t" style="left:-23px;width:300px;text-align:right;top:173px;font-size:15px;color:#111;letter-spacing:-0.4px">40 840,560000</div>
<div class="t" style="left:117px;width:300px;text-align:right;top:173px;font-size:15px;color:#111;letter-spacing:-0.4px">7,560000</div>
<div class="t" style="left:257px;width:300px;text-align:right;top:173px;font-size:15px;color:#111;letter-spacing:-0.4px">0,000000</div>
<div class="t" style="left:397px;width:300px;text-align:right;top:173px;font-size:15px;color:#111;letter-spacing:-0.4px">132,120000</div>
<div class="t" style="left:537px;width:300px;text-align:right;top:173px;font-size:15px;color:#111;letter-spacing:-0.4px">40 840,560000</div>
<div class="t" style="left:677px;width:300px;text-align:right;top:173px;font-size:15px;color:#111;letter-spacing:-0.4px">139,680000</div>
<div class="t" style="left:1097px;width:300px;text-align:right;top:173px;font-size:15px;color:#111;letter-spacing:-0.4px">40 840,560000</div>
<div class="t" style="left:1237px;width:300px;text-align:right;top:173px;font-size:15px;color:#111;letter-spacing:-0.4px">139,680000</div>
<div class="t" style="left:3px;top:201px;font-size:15px;color:#111;letter-spacing:-0.55px">08.03.2018</div>
<div class="t" style="left:-23px;width:300px;text-align:right;top:201px;font-size:15px;color:#111;letter-spacing:-0.4px">26 090,280000</div>
<div class="t" style="left:117px;width:300px;text-align:right;top:201px;font-size:15px;color:#111;letter-spacing:-0.4px">60,120000</div>
<div class="t" style="left:257px;width:300px;text-align:right;top:201px;font-size:15px;color:#111;letter-spacing:-0.4px">46 676,520000</div>
<div class="t" style="left:397px;width:300px;text-align:right;top:201px;font-size:15px;color:#111;letter-spacing:-0.4px">18,720000</div>
<div class="t" style="left:537px;width:300px;text-align:right;top:201px;font-size:15px;color:#111;letter-spacing:-0.4px">72 766,800000</div>
<div class="t" style="left:677px;width:300px;text-align:right;top:201px;font-size:15px;color:#111;letter-spacing:-0.4px">78,840000</div>
<div class="t" style="left:1097px;width:300px;text-align:right;top:201px;font-size:15px;color:#111;letter-spacing:-0.4px">72 766,800000</div>
<div class="t" style="left:1237px;width:300px;text-align:right;top:201px;font-size:15px;color:#111;letter-spacing:-0.4px">78,840000</div>
<div class="t" style="left:3px;top:229px;font-size:15px;color:#111;letter-spacing:-0.55px">09.03.2018</div>
<div class="t" style="left:-23px;width:300px;text-align:right;top:229px;font-size:15px;color:#111;letter-spacing:-0.4px">23 881,320000</div>
<div class="t" style="left:117px;width:300px;text-align:right;top:229px;font-size:15px;color:#111;letter-spacing:-0.4px">66,240000</div>
<div class="t" style="left:257px;width:300px;text-align:right;top:229px;font-size:15px;color:#111;letter-spacing:-0.4px">46 329,840000</div>
<div class="t" style="left:397px;width:300px;text-align:right;top:229px;font-size:15px;color:#111;letter-spacing:-0.4px">28,800000</div>
<div class="t" style="left:537px;width:300px;text-align:right;top:229px;font-size:15px;color:#111;letter-spacing:-0.4px">70 211,160000</div>
<div class="t" style="left:677px;width:300px;text-align:right;top:229px;font-size:15px;color:#111;letter-spacing:-0.4px">95,040000</div>
<div class="t" style="left:1097px;width:300px;text-align:right;top:229px;font-size:15px;color:#111;letter-spacing:-0.4px">70 211,160000</div>
<div class="t" style="left:1237px;width:300px;text-align:right;top:229px;font-size:15px;color:#111;letter-spacing:-0.4px">95,040000</div>
</div>
<div class="r" style="left:1893px;top:272px;width:22px;height:445px;background:#f0f0f0;"></div>
<svg class="s" style="left:1896px;top:280px;" width="14" height="9" viewBox="0 0 14 9"><path d="M2 7L7 2L12 7" fill="none" stroke="#555" stroke-width="1.6"/></svg>
<div class="r" style="left:1893px;top:295px;width:21px;height:114px;background:#cdcdcd;"></div>
<svg class="s" style="left:1896px;top:701px;" width="14" height="9" viewBox="0 0 14 9"><path d="M2 2L7 7L12 2" fill="none" stroke="#555" stroke-width="1.6"/></svg>
<svg class="s" style="left:674px;top:718px;" width="574" height="12" viewBox="0 0 574 12"><rect x="0.5" y="0.5" width="573" height="11" fill="#f0f0f0" stroke="#c8c8c8"/><path d="M9 2.5L12.5 6L16 2.5" fill="none" stroke="#111" stroke-width="1.8"/><path d="M558 2.5L561.5 6L565 2.5" fill="none" stroke="#111" stroke-width="1.8"/><path d="M21 5.5H552" stroke="#3b8fd8" stroke-width="1" stroke-dasharray="1 2"/></svg>
<div class="t " style="left:10px;top:738px;font-size:15px;color:#111;">Первичные данные:</div>
<div class="r" style="left:4px;top:762px;width:1912px;height:353px;background:#fff;"></div>
<div class="r" style="left:4px;top:762px;width:1912px;height:1px;background:#7f8794;"></div>
<div class="r" style="left:4px;top:762px;width:1px;height:353px;background:#7f8794;"></div>
<div class="r" style="left:1915px;top:762px;width:1px;height:353px;background:#7f8794;"></div>
<div class="r" style="left:4px;top:1114px;width:1912px;height:1px;background:#7f8794;"></div>
<div class="r" style="left:5px;top:763px;width:1910px;height:32px;background:#f0f0f0;"></div>
<div class="r" style="left:5px;top:795px;width:1910px;height:1px;background:#dcdcdc;"></div>
<div class="r" style="left:10px;top:768px;width:73px;height:27px;background:#efefef;"></div>
<div class="r" style="left:10px;top:768px;width:73px;height:1px;background:#dcdcdc;"></div>
<div class="t " style="left:18px;top:774px;font-size:15px;color:#111;">Таблица</div>
<div class="r" style="left:83px;top:766px;width:70px;height:30px;background:#fff;"></div>
<div class="r" style="left:83px;top:766px;width:70px;height:1px;background:#dcdcdc;"></div>
<div class="r" style="left:83px;top:766px;width:1px;height:30px;background:#dcdcdc;"></div>
<div class="r" style="left:152px;top:766px;width:1px;height:30px;background:#dcdcdc;"></div>
<div class="t " style="left:93px;top:772px;font-size:15px;color:#111;">График</div>
<div class="r" style="left:18px;top:812px;width:1885px;height:59px;border:1px solid #000;box-sizing:border-box;"></div>
<div class="r" style="left:1531px;top:823px;width:151px;height:36px;background:#e1e1e1;border:1px solid #adadad;box-sizing:border-box;"></div>
<div class="t " style="left:1106px;width:1000px;text-align:center;top:834px;font-size:15px;color:#111;">Настройка графика</div>
<svg class="s" style="left:1690px;top:813px;" width="1" height="57" viewBox="0 0 1 57"><path d="M0.5 0V57" stroke="#888" stroke-width="1" stroke-dasharray="2 2"/></svg>
<svg class="s" style="left:1698px;top:820px;" width="44" height="43" viewBox="0 0 44 43"><defs><linearGradient id="gb" x1="0" y1="0" x2="0" y2="1"><stop offset="0" stop-color="#fdfdfd"/><stop offset="1" stop-color="#e4e4e4"/></linearGradient></defs><rect x="0.5" y="0.5" width="42" height="41" fill="url(#gb)" stroke="#777"/><path d="M2 42H43V2" fill="none" stroke="#555" stroke-width="1.2"/><rect x="7" y="24" width="6" height="14" fill="#e8552e" stroke="#b83a1a" stroke-width=".6"/><rect x="17" y="15" width="6" height="23" fill="#e7d83a" stroke="#b8a820" stroke-width=".6"/><rect x="27" y="6" width="6" height="32" fill="#86c252" stroke="#5a9a30" stroke-width=".6"/><path d="M4 38.5H38" stroke="#777" stroke-width="1"/></svg>
<div class="t " style="left:1747px;top:834px;font-size:15px;color:#0000ee;letter-spacing:0.25px;text-decoration:underline;">Диаграмма Колонки</div>
<svg class="s" style="left:0px;top:0px;pointer-events:none;" width="1920" height="1159" viewBox="0 0 1920 1159"><path d="M71.3 1020.5H1495" stroke="#d0d0d0" stroke-width="1"/><path d="M71.3 999.5H1495" stroke="#d0d0d0" stroke-width="1"/><path d="M71.3 978.5H1495" stroke="#d0d0d0" stroke-width="1"/><path d="M71.3 957.5H1495" stroke="#d0d0d0" stroke-width="1"/><path d="M71.3 936.5H1495" stroke="#d0d0d0" stroke-width="1"/><path d="M71.3 915.5H1495" stroke="#d0d0d0" stroke-width="1"/><path d="M71.3 895.5H1495" stroke="#d0d0d0" stroke-width="1"/><path d="M124.5 894.5V1041" stroke="#d0d0d0" stroke-width="1"/><path d="M177.5 894.5V1041" stroke="#d0d0d0" stroke-width="1"/><path d="M229.5 894.5V1041" stroke="#d0d0d0" stroke-width="1"/><path d="M282.5 894.5V1041" stroke="#d0d0d0" stroke-width="1"/><path d="M335.5 894.5V1041" stroke="#d0d0d0" stroke-width="1"/><path d="M388.5 894.5V1041" stroke="#d0d0d0" stroke-width="1"/><path d="M440.5 894.5V1041" stroke="#d0d0d0" stroke-width="1"/><path d="M493.5 894.5V1041" stroke="#d0d0d0" stroke-width="1"/><path d="M546.5 894.5V1041" stroke="#d0d0d0" stroke-width="1"/><path d="M598.5 894.5V1041" stroke="#d0d0d0" stroke-width="1"/><path d="M651.5 894.5V1041" stroke="#d0d0d0" stroke-width="1"/><path d="M704.5 894.5V1041" stroke="#d0d0d0" stroke-width="1"/><path d="M757.5 894.5V1041" stroke="#d0d0d0" stroke-width="1"/><path d="M809.5 894.5V1041" stroke="#d0d0d0" stroke-width="1"/><path d="M862.5 894.5V1041" stroke="#d0d0d0" stroke-width="1"/><path d="M915.5 894.5V1041" stroke="#d0d0d0" stroke-width="1"/><path d="M967.5 894.5V1041" stroke="#d0d0d0" stroke-width="1"/><path d="M1020.5 894.5V1041" stroke="#d0d0d0" stroke-width="1"/><path d="M1073.5 894.5V1041" stroke="#d0d0d0" stroke-width="1"/><path d="M1126.5 894.5V1041" stroke="#d0d0d0" stroke-width="1"/><path d="M1178.5 894.5V1041" stroke="#d0d0d0" stroke-width="1"/><path d="M1231.5 894.5V1041" stroke="#d0d0d0" stroke-width="1"/><path d="M1284.5 894.5V1041" stroke="#d0d0d0" stroke-width="1"/><path d="M1336.5 894.5V1041" stroke="#d0d0d0" stroke-width="1"/><path d="M1389.5 894.5V1041" stroke="#d0d0d0" stroke-width="1"/><path d="M1442.5 894.5V1041" stroke="#d0d0d0" stroke-width="1"/><path d="M1495.5 894.5V1041" stroke="#d0d0d0" stroke-width="1"/><rect x="183.5" y="1026.9" width="6" height="14.4" fill="#ffbf5e" stroke="#c8902e" stroke-width="1"/><rect x="235.5" y="1017.6" width="6" height="23.7" fill="#ffbf5e" stroke="#c8902e" stroke-width="1"/><rect x="249.5" y="994.8" width="6" height="46.5" fill="#a0577b" stroke="#6e3450" stroke-width="1"/><rect x="288.5" y="1018.4" width="6" height="22.9" fill="#ffbf5e" stroke="#c8902e" stroke-width="1"/><rect x="302.5" y="1030.5" width="6" height="10.8" fill="#a0577b" stroke="#6e3450" stroke-width="1"/><rect x="341.5" y="969.3" width="6" height="72.0" fill="#ffbf5e" stroke="#c8902e" stroke-width="1"/><rect x="393.5" y="955.7" width="6" height="85.6" fill="#ffbf5e" stroke="#c8902e" stroke-width="1"/><rect x="446.5" y="986.6" width="6" height="54.7" fill="#ffbf5e" stroke="#c8902e" stroke-width="1"/><rect x="460.5" y="943.4" width="6" height="97.9" fill="#a0577b" stroke="#6e3450" stroke-width="1"/><rect x="499.5" y="991.2" width="6" height="50.1" fill="#ffbf5e" stroke="#c8902e" stroke-width="1"/><rect x="513.5" y="944.1" width="6" height="97.2" fill="#a0577b" stroke="#6e3450" stroke-width="1"/><rect x="552.5" y="894.5" width="6" height="146.8" fill="#ffbf5e" stroke="#c8902e" stroke-width="1"/><rect x="566.5" y="905.2" width="6" height="136.1" fill="#a0577b" stroke="#6e3450" stroke-width="1"/><rect x="604.5" y="1012.2" width="6" height="29.1" fill="#ffbf5e" stroke="#c8902e" stroke-width="1"/><rect x="618.5" y="1034.2" width="6" height="7.1" fill="#a0577b" stroke="#6e3450" stroke-width="1"/><rect x="671.5" y="1031.2" width="6" height="10.1" fill="#a0577b" stroke="#6e3450" stroke-width="1"/><rect x="724.5" y="1022.2" width="6" height="19.1" fill="#a0577b" stroke="#6e3450" stroke-width="1"/><rect x="777.5" y="1024.2" width="6" height="17.1" fill="#a0577b" stroke="#6e3450" stroke-width="1"/><rect x="868.5" y="947.3" width="6" height="94.0" fill="#ffbf5e" stroke="#c8902e" stroke-width="1"/><rect x="882.5" y="1029.2" width="6" height="12.1" fill="#a0577b" stroke="#6e3450" stroke-width="1"/><rect x="921.5" y="965.3" width="6" height="76.0" fill="#ffbf5e" stroke="#c8902e" stroke-width="1"/><rect x="935.5" y="1003.3" width="6" height="38.0" fill="#a0577b" stroke="#6e3450" stroke-width="1"/><rect x="973.5" y="956.3" width="6" height="85.0" fill="#ffbf5e" stroke="#c8902e" stroke-width="1"/><rect x="987.5" y="998.3" width="6" height="43.0" fill="#a0577b" stroke="#6e3450" stroke-width="1"/><rect x="1026.5" y="947.3" width="6" height="94.0" fill="#ffbf5e" stroke="#c8902e" stroke-width="1"/><rect x="1040.5" y="1003.3" width="6" height="38.0" fill="#a0577b" stroke="#6e3450" stroke-width="1"/><rect x="1079.5" y="974.3" width="6" height="67.0" fill="#ffbf5e" stroke="#c8902e" stroke-width="1"/><rect x="1093.5" y="1016.3" width="6" height="25.0" fill="#a0577b" stroke="#6e3450" stroke-width="1"/><rect x="1131.5" y="934.3" width="6" height="107.0" fill="#ffbf5e" stroke="#c8902e" stroke-width="1"/><rect x="1146.5" y="1005.3" width="6" height="36.0" fill="#a0577b" stroke="#6e3450" stroke-width="1"/><rect x="1184.5" y="931.3" width="6" height="110.0" fill="#ffbf5e" stroke="#c8902e" stroke-width="1"/><rect x="1198.5" y="979.3" width="6" height="62.0" fill="#a0577b" stroke="#6e3450" stroke-width="1"/><rect x="1237.5" y="970.3" width="6" height="71.0" fill="#ffbf5e" stroke="#c8902e" stroke-width="1"/><rect x="1251.5" y="923.3" width="6" height="118.0" fill="#a0577b" stroke="#6e3450" stroke-width="1"/><rect x="1290.5" y="1038.3" width="6" height="3.0" fill="#ffbf5e" stroke="#c8902e" stroke-width="1"/><rect x="1304.5" y="924.0" width="6" height="117.3" fill="#a0577b" stroke="#6e3450" stroke-width="1"/><rect x="1356.5" y="934.3" width="6" height="107.0" fill="#a0577b" stroke="#6e3450" stroke-width="1"/><rect x="1395.5" y="1017.1" width="6" height="24.2" fill="#ffbf5e" stroke="#c8902e" stroke-width="1"/><rect x="1409.5" y="920.0" width="6" height="121.3" fill="#a0577b" stroke="#6e3450" stroke-width="1"/><rect x="1448.5" y="965.1" width="6" height="76.2" fill="#ffbf5e" stroke="#c8902e" stroke-width="1"/><rect x="1462.5" y="993.2" width="6" height="48.1" fill="#a0577b" stroke="#6e3450" stroke-width="1"/><path d="M71.5 894V1047" stroke="#000" stroke-width="1.15"/><path d="M66 1041.5H1495" stroke="#000" stroke-width="1.15"/><path d="M66 1041.5H71" stroke="#000" stroke-width="1.15"/><path d="M66 1020.5H71" stroke="#000" stroke-width="1.15"/><path d="M66 999.5H71" stroke="#000" stroke-width="1.15"/><path d="M66 978.5H71" stroke="#000" stroke-width="1.15"/><path d="M66 957.5H71" stroke="#000" stroke-width="1.15"/><path d="M66 936.5H71" stroke="#000" stroke-width="1.15"/><path d="M66 915.5H71" stroke="#000" stroke-width="1.15"/><path d="M66 895.5H71" stroke="#000" stroke-width="1.15"/><path d="M71.5 1041V1047" stroke="#000" stroke-width="1.15"/><path d="M124.5 1041V1047" stroke="#000" stroke-width="1.15"/><path d="M177.5 1041V1047" stroke="#000" stroke-width="1.15"/><path d="M229.5 1041V1047" stroke="#000" stroke-width="1.15"/><path d="M282.5 1041V1047" stroke="#000" stroke-width="1.15"/><path d="M335.5 1041V1047" stroke="#000" stroke-width="1.15"/><path d="M388.5 1041V1047" stroke="#000" stroke-width="1.15"/><path d="M440.5 1041V1047" stroke="#000" stroke-width="1.15"/><path d="M493.5 1041V1047" stroke="#000" stroke-width="1.15"/><path d="M546.5 1041V1047" stroke="#000" stroke-width="1.15"/><path d="M598.5 1041V1047" stroke="#000" stroke-width="1.15"/><path d="M651.5 1041V1047" stroke="#000" stroke-width="1.15"/><path d="M704.5 1041V1047" stroke="#000" stroke-width="1.15"/><path d="M757.5 1041V1047" stroke="#000" stroke-width="1.15"/><path d="M809.5 1041V1047" stroke="#000" stroke-width="1.15"/><path d="M862.5 1041V1047" stroke="#000" stroke-width="1.15"/><path d="M915.5 1041V1047" stroke="#000" stroke-width="1.15"/><path d="M967.5 1041V1047" stroke="#000" stroke-width="1.15"/><path d="M1020.5 1041V1047" stroke="#000" stroke-width="1.15"/><path d="M1073.5 1041V1047" stroke="#000" stroke-width="1.15"/><path d="M1126.5 1041V1047" stroke="#000" stroke-width="1.15"/><path d="M1178.5 1041V1047" stroke="#000" stroke-width="1.15"/><path d="M1231.5 1041V1047" stroke="#000" stroke-width="1.15"/><path d="M1284.5 1041V1047" stroke="#000" stroke-width="1.15"/><path d="M1336.5 1041V1047" stroke="#000" stroke-width="1.15"/><path d="M1389.5 1041V1047" stroke="#000" stroke-width="1.15"/><path d="M1442.5 1041V1047" stroke="#000" stroke-width="1.15"/><path d="M1495.5 1041V1047" stroke="#000" stroke-width="1.15"/></svg>
<div class="t " style="left:-942px;width:1000px;text-align:right;top:1033px;font-size:15px;color:#111;letter-spacing:-0.5px;">0</div>
<div class="t " style="left:-942px;width:1000px;text-align:right;top:1012px;font-size:15px;color:#111;letter-spacing:-0.5px;">10000</div>
<div class="t " style="left:-942px;width:1000px;text-align:right;top:991px;font-size:15px;color:#111;letter-spacing:-0.5px;">20000</div>
<div class="t " style="left:-942px;width:1000px;text-align:right;top:970px;font-size:15px;color:#111;letter-spacing:-0.5px;">30000</div>
<div class="t " style="left:-942px;width:1000px;text-align:right;top:949px;font-size:15px;color:#111;letter-spacing:-0.5px;">40000</div>
<div class="t " style="left:-942px;width:1000px;text-align:right;top:928px;font-size:15px;color:#111;letter-spacing:-0.5px;">50000</div>
<div class="t " style="left:-942px;width:1000px;text-align:right;top:907px;font-size:15px;color:#111;letter-spacing:-0.5px;">60000</div>
<div class="t " style="left:-942px;width:1000px;text-align:right;top:886px;font-size:15px;color:#111;letter-spacing:-0.5px;">70000</div>
<div class="t " style="left:-402px;width:1000px;text-align:center;top:1057px;font-size:15px;color:#111;letter-spacing:-0.55px;">01.03.2018</div>
<div class="t " style="left:-350px;width:1000px;text-align:center;top:1083px;font-size:15px;color:#111;letter-spacing:-0.55px;">02.03.2018</div>
<div class="t " style="left:-297px;width:1000px;text-align:center;top:1057px;font-size:15px;color:#111;letter-spacing:-0.55px;">03.03.2018</div>
<div class="t " style="left:-244px;width:1000px;text-align:center;top:1083px;font-size:15px;color:#111;letter-spacing:-0.55px;">04.03.2018</div>
<div class="t " style="left:-191px;width:1000px;text-align:center;top:1057px;font-size:15px;color:#111;letter-spacing:-0.55px;">05.03.2018</div>
<div class="t " style="left:-139px;width:1000px;text-align:center;top:1083px;font-size:15px;color:#111;letter-spacing:-0.55px;">06.03.2018</div>
<div class="t " style="left:-86px;width:1000px;text-align:center;top:1057px;font-size:15px;color:#111;letter-spacing:-0.55px;">07.03.2018</div>
<div class="t " style="left:-33px;width:1000px;text-align:center;top:1083px;font-size:15px;color:#111;letter-spacing:-0.55px;">08.03.2018</div>
<div class="t " style="left:19px;width:1000px;text-align:center;top:1057px;font-size:15px;color:#111;letter-spacing:-0.55px;">09.03.2018</div>
<div class="t " style="left:72px;width:1000px;text-align:center;top:1083px;font-size:15px;color:#111;letter-spacing:-0.55px;">10.03.2018</div>
<div class="t " style="left:125px;width:1000px;text-align:center;top:1057px;font-size:15px;color:#111;letter-spacing:-0.55px;">11.03.2018</div>
<div class="t " style="left:178px;width:1000px;text-align:center;top:1083px;font-size:15px;color:#111;letter-spacing:-0.55px;">12.03.2018</div>
<div class="t " style="left:230px;width:1000px;text-align:center;top:1057px;font-size:15px;color:#111;letter-spacing:-0.55px;">13.03.2018</div>
<div class="t " style="left:283px;width:1000px;text-align:center;top:1083px;font-size:15px;color:#111;letter-spacing:-0.55px;">14.03.2018</div>
<div class="t " style="left:336px;width:1000px;text-align:center;top:1057px;font-size:15px;color:#111;letter-spacing:-0.55px;">15.03.2018</div>
<div class="t " style="left:388px;width:1000px;text-align:center;top:1083px;font-size:15px;color:#111;letter-spacing:-0.55px;">16.03.2018</div>
<div class="t " style="left:441px;width:1000px;text-align:center;top:1057px;font-size:15px;color:#111;letter-spacing:-0.55px;">17.03.2018</div>
<div class="t " style="left:494px;width:1000px;text-align:center;top:1083px;font-size:15px;color:#111;letter-spacing:-0.55px;">18.03.2018</div>
<div class="t " style="left:547px;width:1000px;text-align:center;top:1057px;font-size:15px;color:#111;letter-spacing:-0.55px;">19.03.2018</div>
<div class="t " style="left:599px;width:1000px;text-align:center;top:1083px;font-size:15px;color:#111;letter-spacing:-0.55px;">20.03.2018</div>
<div class="t " style="left:652px;width:1000px;text-align:center;top:1057px;font-size:15px;color:#111;letter-spacing:-0.55px;">21.03.2018</div>
<div class="t " style="left:705px;width:1000px;text-align:center;top:1083px;font-size:15px;color:#111;letter-spacing:-0.55px;">22.03.2018</div>
<div class="t " style="left:757px;width:1000px;text-align:center;top:1057px;font-size:15px;color:#111;letter-spacing:-0.55px;">23.03.2018</div>
<div class="t " style="left:810px;width:1000px;text-align:center;top:1083px;font-size:15px;color:#111;letter-spacing:-0.55px;">24.03.2018</div>
<div class="t " style="left:863px;width:1000px;text-align:center;top:1057px;font-size:15px;color:#111;letter-spacing:-0.55px;">25.03.2018</div>
<div class="t " style="left:916px;width:1000px;text-align:center;top:1083px;font-size:15px;color:#111;letter-spacing:-0.55px;">26.03.2018</div>
<div class="t " style="left:968px;width:1000px;text-align:center;top:1057px;font-size:15px;color:#111;letter-spacing:-0.55px;">27.03.2018</div>
<div class="r" style="left:1531px;top:922px;width:16px;height:16px;background:#ffbf5e;border:1px solid #c8902e;box-sizing:border-box;"></div>
<div class="t " style="left:1555px;top:922px;font-size:15px;color:#111;">Подстанции - ПС Вернинская 110/6 - ДЭС-1 - A+</div>
<div class="r" style="left:1531px;top:947px;width:16px;height:16px;background:#5b80b6;border:1px solid #3a5a8a;box-sizing:border-box;"></div>
<div class="t " style="left:1555px;top:947px;font-size:15px;color:#111;">Подстанции - ПС Вернинская 110/6 - ДЭС-1 - A-</div>
<div class="r" style="left:1531px;top:972px;width:16px;height:16px;background:#a0577b;border:1px solid #6e3450;box-sizing:border-box;"></div>
<div class="t " style="left:1555px;top:972px;font-size:15px;color:#111;">Подстанции - ПС Вернинская 110/6 - ДЭС-2 - A+</div>
<div class="r" style="left:1531px;top:997px;width:16px;height:16px;background:#6a7a62;border:1px solid #4a5a42;box-sizing:border-box;"></div>
<div class="t " style="left:1555px;top:997px;font-size:15px;color:#111;">Подстанции - ПС Вернинская 110/6 - ДЭС-2 - A-</div>
<div class="r" style="left:1531px;top:1022px;width:16px;height:16px;background:#e8775f;border:1px solid #b8553f;box-sizing:border-box;"></div>
<div class="t " style="left:1555px;top:1022px;font-size:15px;color:#111;">Потребители - A+</div>
<div class="r" style="left:1531px;top:1047px;width:16px;height:16px;background:#59a294;border:1px solid #3a7a6e;box-sizing:border-box;"></div>
<div class="t " style="left:1555px;top:1047px;font-size:15px;color:#111;">Потребители - A-</div>
<div class="r" style="left:0px;top:1115px;width:1920px;height:2px;background:#ffffff;"></div>
<div class="r" style="left:0px;top:1117px;width:1920px;height:2px;background:#e9e9e9;"></div>
<div class="r" style="left:0px;top:1115px;width:1px;height:2px;background:#d9d9d9;"></div>
<div class="r" style="left:0px;top:1119px;width:1920px;height:31px;background:#2b579a;"></div>
<div class="r" style="left:0px;top:1150px;width:1920px;height:9px;background:#0c0c0c;"></div>
<div class="r" style="left:680px;top:1150px;width:61px;height:9px;background:#3f3f3f;"></div>
<div class="r" style="left:1914px;top:1150px;width:1px;height:9px;background:#777;"></div>
<div class="t " style="left:1797px;top:1154px;font-size:13px;color:#fff;">10:58</div>
</body></html>
